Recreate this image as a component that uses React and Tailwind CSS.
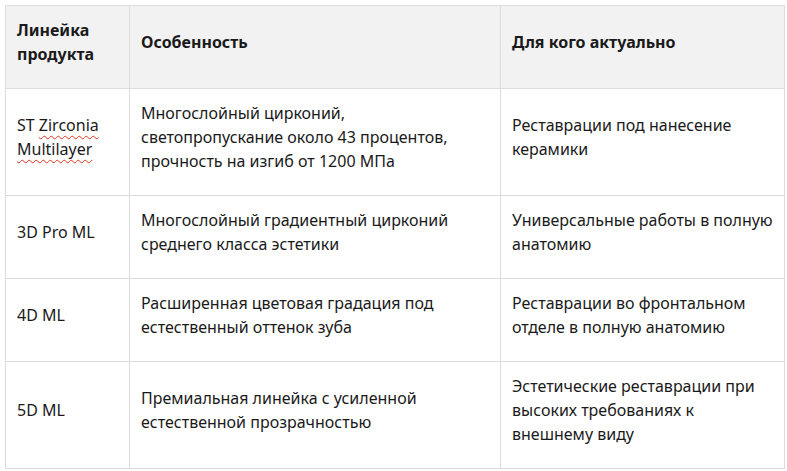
import React from "react";

const Wavy = ({ children }) => (
  <span className="underline decoration-wavy decoration-[#e0341f] decoration-1 underline-offset-[4px]">{children}</span>
);

const rows = [
  {
    h: "h-[107px]",
    a: [<>ST <Wavy>Zirconia</Wavy></>, <Wavy>Multilayer</Wavy>],
    b: ["Многослойный цирконий,", "светопропускание около 43 процентов,", "прочность на изгиб от 1200 МПа"],
    c: ["Реставрации под нанесение", "керамики"],
  },
  {
    h: "h-[83px]",
    a: ["3D Pro ML"],
    b: ["Многослойный градиентный цирконий", "среднего класса эстетики"],
    c: ["Универсальные работы в полную", "анатомию"],
  },
  {
    h: "h-[83px]",
    a: ["4D ML"],
    b: ["Расширенная цветовая градация под", "естественный оттенок зуба"],
    c: ["Реставрации во фронтальном", "отделе в полную анатомию"],
  },
  {
    h: "h-[107px]",
    a: ["5D ML"],
    b: ["Премиальная линейка с усиленной", "естественной прозрачностью"],
    c: ["Эстетические реставрации при", "высоких требованиях к", "внешнему виду"],
  },
];

const Lines = ({ lines }) => (
  <div className="flex flex-col">
    {lines.map((l, i) => (
      <div key={i} className="whitespace-nowrap">{l}</div>
    ))}
  </div>
);

export default function App() {
  const td = "border border-[#dcdcdc] align-middle pl-[11px] pr-0 pt-0 pb-[10px]";
  return (
    <div className="w-[787px] h-[471px] bg-white pt-[5px] pl-[5px] text-[16px] leading-[24px] text-[#1a1a1a] font-['Noto_Sans','Open_Sans',sans-serif]">
      <table className="table-fixed border-collapse w-[779px]">
        <colgroup>
          <col className="w-[124px]" />
          <col className="w-[371px]" />
          <col className="w-[284px]" />
        </colgroup>
        <thead>
          <tr className="h-[83px] bg-[#f2f2f2]">
            <th className={td + " text-left font-bold"}><Lines lines={["Линейка", "продукта"]} /></th>
            <th className={td + " text-left font-bold"}><Lines lines={["Особенность"]} /></th>
            <th className={td + " text-left font-bold"}><Lines lines={["Для кого актуально"]} /></th>
          </tr>
        </thead>
        <tbody>
          {rows.map((r, i) => (
            <tr key={i} className={r.h}>
              <td className={td}><Lines lines={r.a} /></td>
              <td className={td}><Lines lines={r.b} /></td>
              <td className={td}><Lines lines={r.c} /></td>
            </tr>
          ))}
        </tbody>
      </table>
    </div>
  );
}
